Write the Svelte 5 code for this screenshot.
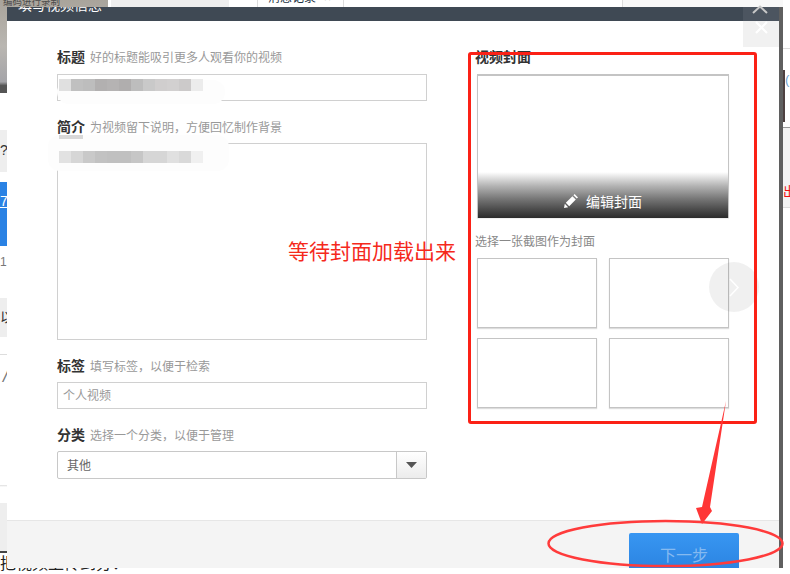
<script>
  const blurA = ['#e0e0e0','#c0c0c0','#bdbdbd','#b2b0b0','#b5b3b3','#b0aeae','#bdbdbd','#c9c9c9','#d0cece','#d2d0d0','#cccaca','#ececec'];
  const blurB = ['#e2e2e2','#d6d6d6','#c9c9c9','#c2c2c2','#c0c0c0','#c0c0c0','#c6c6c6','#d6d6d6','#d6d6d6','#e0e0e0','#d9d9d9','#f0f0f0'];
</script>

<div class="page">
  <div class="backdrop">
    <div class="bg-photo"><span>编码进行录制</span></div>
    <div class="bg-strip"></div>
    <div class="bg-tab"><span>消息记录</span><i>×</i></div>
    <div class="bg-topright"></div>
    <div class="bg-q">?</div>
    <div class="bg-blue"><u>7</u></div>
    <div class="bg-num">19</div>
    <div class="bg-gray">以</div>
    <div class="bg-line"></div>
    <div class="bg-i">/</div>
    <div class="bg-low"></div>
    <div class="bg-bottom">把视频上传到分：</div>
    <div class="bg-right">
      <div class="r-dark"></div>
      <span class="r-paren">(</span>
      <span class="r-red">出</span>
    </div>
  </div>

  <div class="dialog">
    <header class="dlg-head"><span>填写视频信息</span></header>
    <div class="dlg-body">
      <div class="col-left">
        <div class="field">
          <div class="lab"><b>标题</b><span>好的标题能吸引更多人观看你的视频</span></div>
          <div class="input title">
            <div class="smear s1"></div>
            <div class="blur">{#each blurA as c}<i style:background={c}></i>{/each}</div>
          </div>
        </div>
        <div class="field gap">
          <div class="lab"><b>简介</b><span>为视频留下说明，方便回忆制作背景</span></div>
          <div class="input area">
            <div class="smear s2"></div>
            <div class="blur b0"><i></i><i></i></div>
            <div class="blur b2">{#each blurB as c}<i style:background={c}></i>{/each}</div>
          </div>
        </div>
        <div class="field gap">
          <div class="lab"><b>标签</b><span>填写标签，以便于检索</span></div>
          <div class="input tag">个人视频</div>
        </div>
        <div class="field gap">
          <div class="lab"><b>分类</b><span>选择一个分类，以便于管理</span></div>
          <div class="select">
            <span class="val">其他</span>
            <span class="drop"><svg width="11" height="6" viewBox="0 0 11 6"><path d="M0 0h11L5.500 6z" fill="#555"/></svg></span>
          </div>
        </div>
      </div>
      <div class="col-right">
        <div class="cover-t">视频封面</div>
        <div class="cover">
          <div class="cover-shade">
            <svg width="14" height="14" viewBox="0 0 14 14"><path d="M0 14l.8-4.200 3.400 3.400zM1.800 8.800l6.600-6.600 3.400 3.400-6.600 6.600zM9.400 1.200L10.600 0 14 3.400l-1.200 1.200z" fill="#fff"/></svg>
            <span>编辑封面</span>
          </div>
        </div>
        <div class="pick">选择一张截图作为封面</div>
        <div class="grid"><div></div><div></div><div></div><div></div></div>
      </div>
    </div>
    <footer class="dlg-foot"><button class="next">下一步</button></footer>
  </div>

  <div class="close"><svg width="13" height="13" viewBox="0 0 13 13"><path d="M1 1l11 11M12 1L1 12" stroke="#fff" stroke-width="2.200"/></svg></div>
  <svg class="chev-top" width="16" height="9" viewBox="0 0 16 9"><path d="M1 8l7-6.500L15 8" fill="none" stroke="#c8c8c8" stroke-width="2"/></svg>
  <div class="next-round"><svg width="10" height="19" viewBox="0 0 10 19"><path d="M1 1l8 8.500-8 8.500" fill="none" stroke="#fff" stroke-width="1.500"/></svg></div>

  <div class="note">等待封面加载出来</div>
  <div class="redbox"></div>
  <svg class="anno" width="790" height="574" viewBox="0 0 790 574">
    <path d="M726 401L702 507 696 508 702 524 712 511 710 507z" fill="#ff3636"/>
    <ellipse cx="665.500" cy="543.500" rx="117" ry="22.500" fill="none" stroke="#ff3b3b" stroke-width="2.500"/>
  </svg>
</div>

<style>
  :global(body) { margin: 0; background: #fff; font-family: "Liberation Sans", "Noto Sans CJK SC", sans-serif; }
  .page { position: relative; width: 790px; height: 574px; overflow: hidden; background: #fff; }
  .backdrop { position: absolute; inset: 0; color: #333; font-size: 14px; }
  .backdrop > div { position: absolute; }
  .bg-photo { left: 0; top: 0; width: 108px; height: 93px; background: linear-gradient(180deg, #a9a49b 0, #b9b6b1 50%, #a4a4a8 88%, #555 92%, #555 100%); overflow: hidden; }
  .bg-photo span { position: absolute; left: 3px; top: -5px; white-space: nowrap; color: #4a4a4a; font-size: 9.500px; line-height: 14px; }
  .bg-strip { left: 111px; top: 0; width: 118px; height: 7px; background: #eee; }
  .bg-tab { left: 257px; top: 0; width: 85px; height: 7px; border-left: 1px solid #ddd; border-right: 1px solid #ddd; overflow: hidden; }
  .bg-tab span { position: absolute; left: 10px; top: -10px; font-size: 12px; line-height: 16px; color: #234; white-space: nowrap; }
  .bg-tab i { position: absolute; left: 66px; top: -10px; font-style: normal; color: #999; font-size: 12px; line-height: 16px; }
  .bg-topright { left: 622px; top: 0; width: 168px; height: 7px; background: #f8f8f8; border-left: 1px solid #ddd; box-sizing: border-box; }
  .bg-q { left: 0; top: 130px; width: 7px; height: 42px; background: #eee; line-height: 40px; overflow: hidden; }
  .bg-blue { left: 0; top: 182px; width: 7px; height: 64px; background: #2a82e4; color: #fff; font-size: 14px; overflow: hidden; }
  .bg-blue u { position: absolute; left: 0; top: 11px; }
  .bg-num { left: 0; top: 255px; width: 7px; overflow: hidden; font-size: 12px; color: #777; }
  .bg-gray { left: 0; top: 298px; width: 7px; height: 39px; background: #eee; overflow: hidden; line-height: 39px; white-space: nowrap; }
  .bg-line { left: 0; top: 354px; width: 7px; height: 1px; background: #ddd; }
  .bg-i { left: 3px; top: 366px; font-size: 18px; font-style: italic; color: #777; }
  .bg-low { left: 0; top: 485px; width: 7px; height: 66px; background: linear-gradient(180deg, #ddd 0, #fff 2px, #fff 18px, #eee 18px); }
  .bg-bottom { left: 0; top: 551px; font-size: 16px; white-space: nowrap; color: #222; border-top: 2px solid #444; line-height: 22px; }
  .bg-right { left: 783px; top: 0; width: 7px; height: 574px; overflow: hidden; background: linear-gradient(180deg, #fff 0 48px, #ddd 48px 49px, #fff 49px 127px, #999 127px 128px, #f3f3f3 128px 207px, #ddd 207px 208px, #fff 208px); }
  .r-dark { position: absolute; left: 0; top: 70px; width: 2px; height: 52px; background: #4d4040; }
  .r-paren { position: absolute; left: 2px; top: 72px; font-size: 13px; color: #6a9fd0; }
  .r-red { position: absolute; left: 0; top: 181px; font-size: 13px; color: #f01010; }

  .dialog { position: absolute; left: 7px; top: 7px; width: 772px; height: 561px; background: #fff; display: flex; flex-direction: column; border-right: 4px solid #5f5f5f; }
  .dlg-head { height: 14px; background: #3f4954; color: #fff; font-size: 14px; overflow: hidden; position: relative; flex: none; }
  .dlg-head span { position: absolute; left: 11px; top: -11px; white-space: nowrap; line-height: 18px; }
  .dlg-body { flex: 1; display: flex; padding: 26px 0 0 50px; min-height: 0; }
  .col-left { width: 370px; flex: none; }
  .col-right { width: 252px; margin-left: 50px; }
  .lab { font-size: 12px; color: #999; height: 20px; line-height: 20px; white-space: nowrap; }
  .lab b { font-size: 14px; color: #333; margin-right: 5px; }
  .gap { margin-top: 16px; }
  .input { margin-top: 6px; box-sizing: border-box; border: 1px solid #d0d0d0; height: 27px; position: relative; background: #fff; }
  .title { margin-top: 7px; }
  .area { height: 197px; }
  .tag { font-size: 12px; color: #999; line-height: 27px; padding-left: 5px; }
  .blur { position: absolute; left: 1px; top: 4px; display: flex; height: 12px; }
  .blur i { width: 12px; height: 12px; display: block; }
  .blur.b2 { top: 7px; }
  .blur.b0 { top: -9px; height: 4px; }
  .blur.b0 i { height: 4px; background: #d8d8d8; }
  .smear { position: absolute; background: #fdfdfd; border-radius: 12px; }
  .s1 { left: -1px; top: 5px; width: 168px; height: 24px; }
  .s2 { left: -10px; top: -9px; width: 181px; height: 36px; }
  .select { margin-top: 6px; box-sizing: border-box; height: 28px; border: 1px solid #c8c8c8; border-radius: 2px; display: flex; font-size: 12px; color: #666; }
  .val { flex: 1; line-height: 28px; padding-left: 9px; }
  .drop { width: 29px; border-left: 1px solid #c8c8c8; background: linear-gradient(180deg, #fff, #ececec); display: flex; align-items: center; justify-content: center; }

  .cover-t { font-size: 14px; font-weight: bold; color: #333; line-height: 20px; margin-left: -2px; height: 20px; }
  .cover { box-sizing: border-box; width: 252px; height: 144px; margin-top: 7px; border: 1px solid #c4c4c4; border-top-width: 2px; border-bottom: 0; position: relative; background: #fff; box-shadow: 0 1px 1px #eee; }
  .cover-shade { position: absolute; left: 0; right: 0; bottom: 0; height: 46px; background: linear-gradient(180deg, #fff 0%, #b4b4b4 30%, #777 58%, #444 85%, #2a2a2a 100%); display: flex; align-items: center; justify-content: center; gap: 8px; color: #fff; font-size: 14px; padding-top: 12px; box-sizing: border-box; }
  .pick { font-size: 12px; color: #888; margin: 16px 0 0 -2px; height: 17px; line-height: 17px; }
  .grid { display: grid; grid-template-columns: 120px 120px; gap: 10px 12px; margin-top: 7px; }
  .grid div { box-sizing: border-box; height: 70px; border: 1px solid #c4c4c4; box-shadow: 0 1px 1px #ddd; background: #fff; }

  .dlg-foot { height: 48px; flex: none; box-sizing: border-box; background: #f4f4f4; border-top: 1px solid #e6e6e6; position: relative; overflow: hidden; }
  .next { position: absolute; left: 622px; top: 12px; width: 110px; height: 40px; border: 0; border-radius: 2px; padding: 1px 0 0; font: 16px "Liberation Sans", "Noto Sans CJK SC", sans-serif; color: #85baf0; background: linear-gradient(180deg, #3896f2, #2a82e0); }

  .close { position: absolute; left: 743px; top: 7px; width: 36px; height: 40px; background: linear-gradient(180deg, #4c5560 0 14px, #f1f1f1 14px); display: flex; align-items: center; justify-content: center; }
  .chev-top { position: absolute; left: 752px; top: 5px; }
  .next-round { position: absolute; left: 709px; top: 262px; width: 50px; height: 50px; border-radius: 50%; background: rgba(0,0,0,.06); display: flex; align-items: center; justify-content: center; }
  .note { position: absolute; left: 288px; top: 238px; font-size: 21px; line-height: 28px; color: #f5291c; white-space: nowrap; }
  .redbox { position: absolute; left: 468px; top: 52px; width: 289px; height: 372px; box-sizing: border-box; border: 3px solid #fb2116; border-radius: 3px; }
  .anno { position: absolute; left: 0; top: 0; }
</style>
